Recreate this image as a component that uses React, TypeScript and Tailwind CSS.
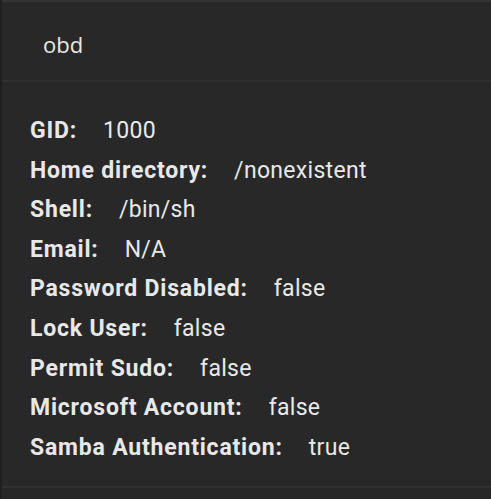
const ROWS: [string, string][] = [
  ['GID:', '1000'],
  ['Home directory:', '/nonexistent'],
  ['Shell:', '/bin/sh'],
  ['Email:', 'N/A'],
  ['Password Disabled:', 'false'],
  ['Lock User:', 'false'],
  ['Permit Sudo:', 'false'],
  ['Microsoft Account:', 'false'],
  ['Samba Authentication:', 'true'],
]

export default function App() {
  return (
    <div className="w-[491px] h-[499px] bg-[#282828] text-[#e8e8e8] font-['Roboto',sans-serif] border-l-2 border-[#1f1f1f] flex flex-col overflow-hidden">
      <div className="border-t-[2px] border-[#333333] h-[3px]" />
      {/* Header */}
      <div className="h-[79px] flex items-center pl-[41px] pt-[5px] text-[22px] font-['Open_Sans',sans-serif] border-b-2 border-[#303030]">
        obd
      </div>

      {/* Details */}
      <div className="pt-[29px] pb-[19px] pl-[28px] flex flex-col border-b-2 border-[#323232]">
        {ROWS.map(([k, v]) => (
          <div key={k} className="flex gap-[26px] text-[23px] leading-[39.6px]">
            <span className="font-bold tracking-[0.8px]">{k}</span>
            <span className="tracking-[0.3px]">{v}</span>
          </div>
        ))}
      </div>
      <div className="flex-1 bg-[#272727]" />
    </div>
  )
}
